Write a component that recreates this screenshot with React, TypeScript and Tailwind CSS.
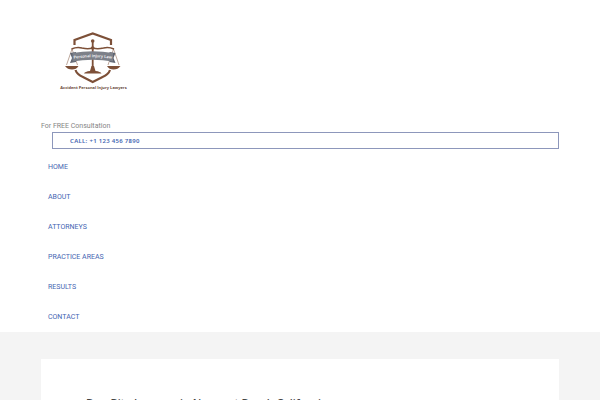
const navItems = [
    { name: 'Home', href: '#home' },
    { name: 'About', href: '#about' },
    { name: 'Attorneys', href: '#attorneys' },
    { name: 'Practice Areas', href: '#practice-areas' },
    { name: 'Results', href: '#results' },
    { name: 'Contact', href: '#contact' },
];

const Logo = () => (
    <svg viewBox="0 0 90 70" className="block h-[70px] w-[90px]" role="img" aria-label="Accident Personal Injury Lawyers">
        {/* Shield */}
        <g fill="none" stroke="#7d5038" strokeWidth="2.200">
            <path d="M24.500 20V15L42.700 8.500L61 15V20" />
            <path d="M25.500 45Q27 49.500 33 52L42.700 57L52.500 52Q58.500 49.500 60 45" />
        </g>
        {/* Scales */}
        <g fill="none" stroke="#7d5038">
            <path d="M21.500 24Q27 21.500 32 23Q38 24.500 42.700 23Q47.500 24.500 53.500 23Q58.500 21.500 64 24" strokeWidth="1.600" />
            <path d="M22 24L16.500 40M22 24L27.500 40M63.500 24L58 40M63.500 24L69 40" strokeWidth="0.500" />
            <path d="M42.700 15V47" strokeWidth="1.800" />
        </g>
        <g fill="#7d5038">
            <circle cx="42.700" cy="16" r="1.800" />
            <circle cx="42.700" cy="23" r="1.800" />
            <path d="M15 41H28.500Q26.500 44.500 22 44.500Q17.500 44.500 15 41Z" />
            <path d="M57 41H70.500Q68 44.500 63.500 44.500Q59 44.500 57 41Z" />
            <path d="M34 48.500Q35 46.500 40 46L41.500 41H44L45.500 46Q50.500 46.500 51.500 48.500Z" />
        </g>
        {/* Ribbon */}
        <path d="M20 28L26 27V37L20 38L22 33ZM65.500 28L59.500 27V37L65.500 38L63.500 33Z" fill="#5f6470" />
        <path d="M22.500 28Q42.700 24.500 63 28V36.500Q42.700 33 22.500 36.500Z" fill="#7c8089" />
        <path id="ribbon" d="M23 34Q42.700 30.500 62.500 34" fill="none" />
        <text fontFamily="Open Sans, sans-serif" fontSize="4" fontWeight="600" fill="#fff" textAnchor="middle">
            <textPath href="#ribbon" startOffset="50%">Personal Injury Law</textPath>
        </text>
        <text x="43.500" y="64" fontFamily="Open Sans, sans-serif" fontSize="4" fontWeight="700" fill="#69483a" textAnchor="middle">
            Accident Personal Injury Lawyers
        </text>
    </svg>
);

const Header = () => (
    <header className="bg-white px-10 pt-[25px]">
        <div className="px-px">
            <a href="#home" className="ml-[9px] block w-fit">
                <Logo />
            </a>
            <p className="mt-[25px] text-[7px] leading-3 text-[#858585]">For FREE Consultation</p>
            <a
                href="tel:+11234567890"
                className="ml-[11px] block border border-[#8d97bb] px-[17px] pt-px font-['Noto_Sans',sans-serif] text-[6px] leading-[14px] font-semibold tracking-wider text-[#4565b2]"
            >
                CALL: +1 123 456 7890
            </a>
            <nav className="mt-[3px]">
                <ul>
                    {navItems.map((item) => (
                        <li key={item.name}>
                            <a href={item.href} className="block px-[7px] text-[7px] leading-[30px] text-[#4565b2] uppercase">
                                {item.name}
                            </a>
                        </li>
                    ))}
                </ul>
            </nav>
        </div>
    </header>
);

const App = () => (
    <div className="min-h-screen bg-[#f4f4f4] font-[Roboto,sans-serif]">
        <Header />
        <main className="px-10 pt-[27px]">
            <article className="mx-px bg-white px-[45px] pt-9 pb-11">
                <h1 className="font-['Noto_Sans',sans-serif] text-[11px] leading-4 font-medium text-[#444]">
                    Dog Bite Lawyers in Newport Beach California
                </h1>
            </article>
        </main>
    </div>
);

export default App;
